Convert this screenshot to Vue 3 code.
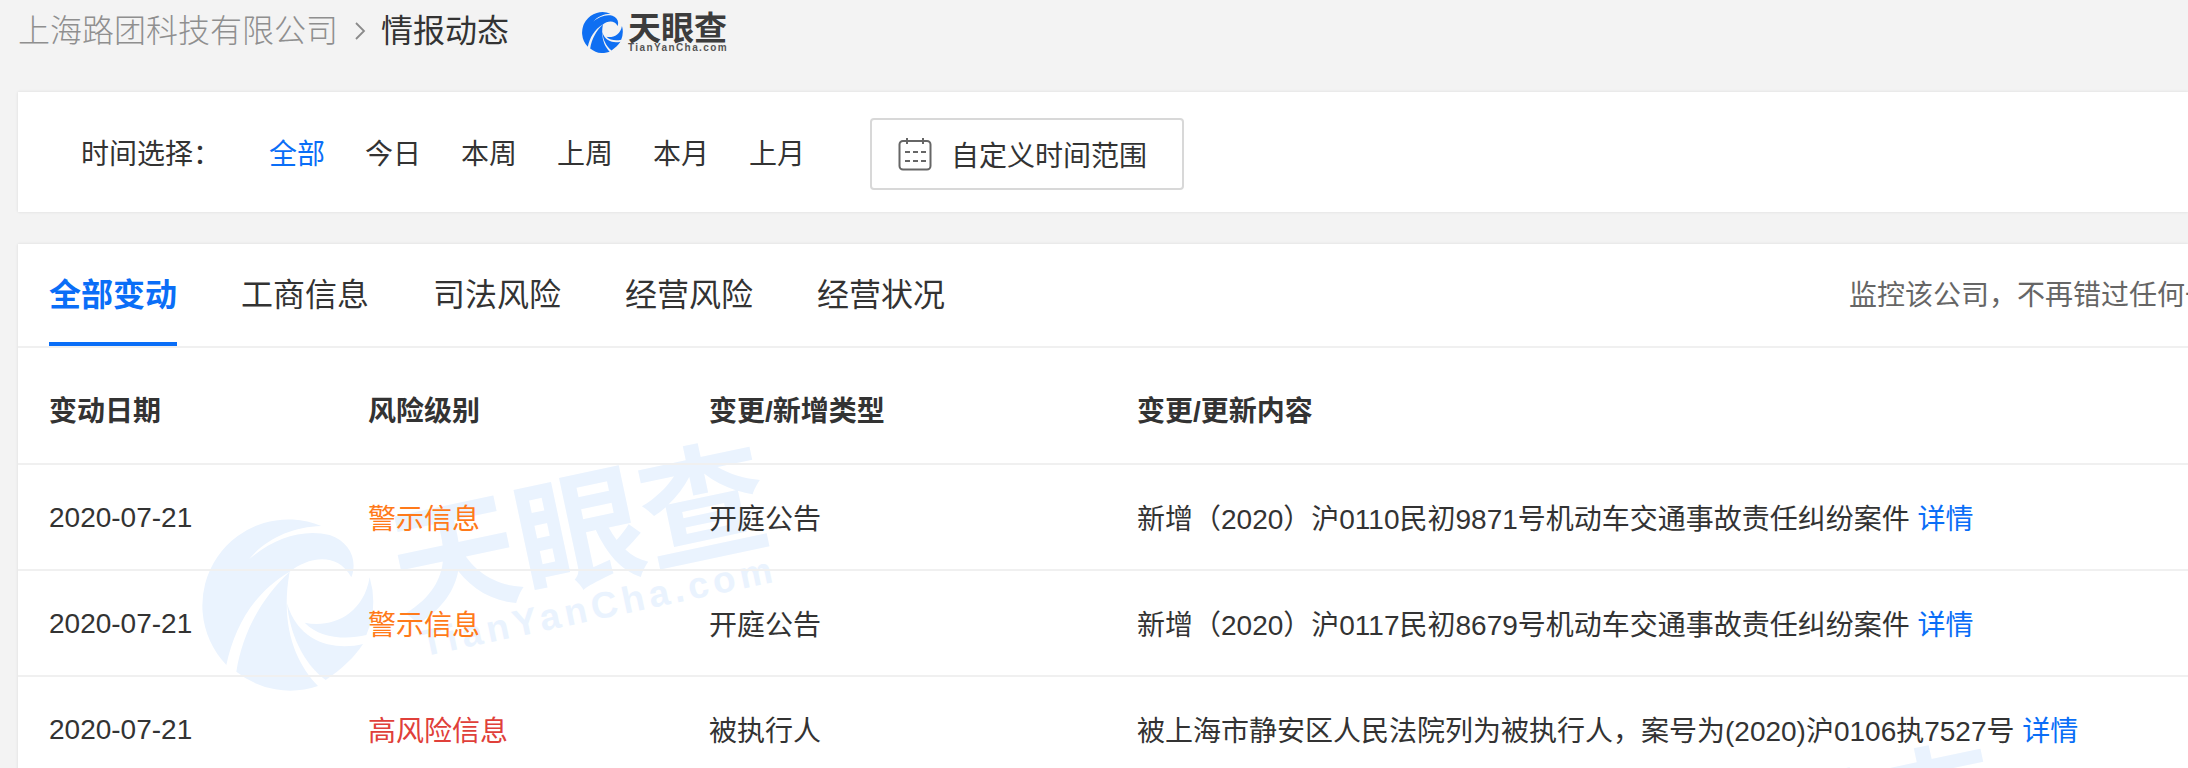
<script setup>
const times = ['今日', '本周', '上周', '本月', '上月']
const tabs = ['工商信息', '司法风险', '经营风险', '经营状况']
const rows = [
  { date: '2020-07-21', level: '警示信息', cls: 'warn', type: '开庭公告', text: '新增（2020）沪0110民初9871号机动车交通事故责任纠纷案件' },
  { date: '2020-07-21', level: '警示信息', cls: 'warn', type: '开庭公告', text: '新增（2020）沪0117民初8679号机动车交通事故责任纠纷案件' },
  { date: '2020-07-21', level: '高风险信息', cls: 'high', type: '被执行人', text: '被上海市静安区人民法院列为被执行人，案号为(2020)沪0106执7527号' }
]
const markPaths = [
  'M395 78A258 258 0 0 0 110 495C135 380 190 280 300 215C350 175 440 150 485 232C505 180 480 125 420 105C340 85 250 115 178 178C230 115 310 80 395 78Z',
  'M300 215C220 290 160 390 140 515A258 258 0 0 0 385 558C320 490 270 380 300 215Z',
  'M292 310C300 400 340 490 408 540C460 505 495 470 520 432C450 450 330 440 292 310Z',
  'M345 368C420 385 520 350 540 232A258 258 0 0 1 530 405C470 420 390 415 345 368Z'
]
</script>

<template>
  <div class="page">
    <header class="crumbs">
      <span class="crumb-company">上海路团科技有限公司</span>
      <svg class="chev" viewBox="0 0 12 20" width="12" height="20"><path d="M2 2l8 8-8 8" fill="none" stroke="#8a8a8a" stroke-width="1.8" /></svg>
      <span class="crumb-current">情报动态</span>
      <div class="logo">
        <svg class="mark" viewBox="37 57 516 516" width="41" height="41">
          <path v-for="d in markPaths" :key="d" :d="d" fill="#0f6ff2" />
        </svg>
        <div class="logo-words">
          <span class="logo-cn">天眼查</span>
          <span class="logo-en">TianYanCha.com</span>
        </div>
      </div>
    </header>

    <section class="card filter">
      <span class="filter-label">时间选择：</span>
      <div class="options">
        <span class="option active">全部</span>
        <span v-for="t in times" :key="t" class="option">{{ t }}</span>
      </div>
      <button class="range">
        <svg viewBox="0 0 34 34" width="34" height="34">
          <rect x="1.5" y="4" width="31" height="28.5" rx="3.5" fill="none" stroke="#666" stroke-width="2" />
          <path d="M9 1v6M25 1v6" stroke="#666" stroke-width="2" />
          <path d="M7 15h5M15 15h5M23 15h5M7 24h5M15 24h5M23 24h5" stroke="#666" stroke-width="2" />
        </svg>
        <span>自定义时间范围</span>
      </button>
    </section>

    <section class="card main">
      <div class="tabs">
        <span class="tab active">全部变动</span>
        <span v-for="t in tabs" :key="t" class="tab">{{ t }}</span>
        <span class="monitor">监控该公司，不再错过任何一条动态</span>
      </div>
      <div class="table">
        <div class="row head">
          <span>变动日期</span><span>风险级别</span><span>变更/新增类型</span><span>变更/更新内容</span>
        </div>
        <div v-for="(r, i) in rows" :key="i" class="row">
          <span class="date">{{ r.date }}</span>
          <span :class="r.cls">{{ r.level }}</span>
          <span>{{ r.type }}</span>
          <span>{{ r.text }} <a class="link">详情</a></span>
        </div>
      </div>
      <svg class="wm-mark" viewBox="37 57 516 516" width="172" height="172" aria-hidden="true">
        <path v-for="d in markPaths" :key="d" :d="d" fill="#eaf3fe" />
      </svg>
      <span class="wm-cn wm-cn-a" aria-hidden="true">天眼查</span>
      <span class="wm-en" aria-hidden="true">TianYanCha.com</span>
      <span class="wm-cn wm-cn-b" aria-hidden="true">天眼查</span>
    </section>
  </div>
</template>

<style scoped>
.page {
  width: 2188px;
  height: 768px;
  overflow: hidden;
  background: #f3f3f3;
  font-family: "Liberation Sans", "Noto Sans CJK SC", sans-serif;
  color: #333;
  padding-left: 18px;
  box-sizing: border-box;
}
.crumbs {
  height: 92px;
  display: flex;
  align-items: flex-start;
  font-size: 32px;
  line-height: 56px;
}
.crumb-company { color: #8f8f8f; font-weight: 300; font-family: "Noto Sans CJK SC", sans-serif; }
.chev { margin: 21px 15px 0 16px; }
.crumb-current { color: #333; font-family: "Noto Sans CJK SC", sans-serif; }
.logo { display: flex; align-items: center; gap: 5px; margin: 11px 0 0 73px; height: 42px; }
.logo-words { display: flex; flex-direction: column; line-height: 1; }
.logo-cn { font-family: "Noto Sans CJK SC", sans-serif; font-size: 33px; font-weight: 700; color: #3c3c3c; line-height: 31px; }
.logo-en { font-size: 10px; font-weight: 700; letter-spacing: 1.4px; color: #555; line-height: 11px; }
.card {
  background: #fff;
  box-shadow: 0 0 3px rgba(0, 0, 0, 0.1);
}
.filter {
  height: 120px;
  display: flex;
  align-items: center;
  padding-left: 63px;
  margin-bottom: 32px;
  font-size: 28px;
}
.filter-label { width: 188px; flex: none; }
.options { display: flex; gap: 40px; }
.option { width: 56px; white-space: nowrap; color: #333; }
.option.active { color: #0a6ef7; }
.range {
  margin: 3px 0 0 65px;
  width: 314px;
  height: 72px;
  border: 2px solid #d8d8d8;
  border-radius: 4px;
  background: #fff;
  display: flex;
  align-items: center;
  gap: 19px;
  padding: 0 0 0 26px;
  font: inherit;
  color: #333;
}
.main { position: relative; height: 600px; overflow: hidden; }
.tabs {
  height: 104px;
  border-bottom: 2px solid #f0f0f0;
  display: flex;
  padding-left: 31px;
  gap: 64px;
  font-size: 32px;
  line-height: 103px;
  position: relative;
  z-index: 1;
  white-space: nowrap;
  box-sizing: border-box;
}
.tab { color: #333; height: 102px; box-sizing: border-box; }
.tab.active { color: #0a6ef7; font-weight: 700; border-bottom: 4px solid #0a6ef7; }
.monitor { font-size: 28px; color: #666; margin-left: 840px; }
.table { position: relative; z-index: 1; }
.row {
  display: grid;
  grid-template-columns: 319px 341px 428px 1fr;
  padding-left: 31px;
  height: 106px;
  align-items: center;
  border-bottom: 2px solid #f0f0f0;
  box-sizing: border-box;
  font-size: 28px;
  white-space: nowrap;
}
.row.head { height: 117px; font-weight: 700; padding-top: 6px; }
.date { padding-top: 1px; }
.warn { color: #ff7a1a; }
.high { color: #e0403a; }
.link { color: #0a6ef7; }
.wm-mark { position: absolute; left: 184px; top: 275px; z-index: 0; }
.wm-cn, .wm-en {
  position: absolute;
  color: #eaf3fe;
  transform: rotate(-12deg);
  white-space: nowrap;
  z-index: 0;
}
.wm-cn {
  font-family: "Noto Sans CJK SC", sans-serif;
  font-size: 127px;
  font-weight: 700;
  line-height: 127px;
}
.wm-cn-a { left: 369px; top: 216px; }
.wm-cn-b { left: 1600px; top: 518px; }
.wm-en {
  left: 399px;
  top: 341px;
  font-size: 37px;
  font-weight: 700;
  letter-spacing: 4.7px;
  line-height: 44px;
}
</style>
